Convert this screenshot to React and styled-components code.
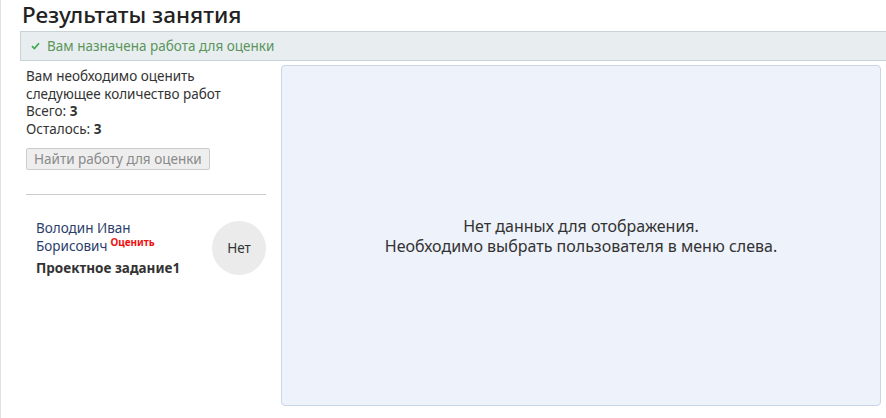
import styled, { createGlobalStyle } from "styled-components";

const GlobalStyle = createGlobalStyle`
  html, body {
    margin: 0;
    padding: 0;
    background: #ffffff;
  }
  body {
    font-family: "Noto Sans", "Open Sans", sans-serif;
    color: #333333;
  }
`;

const Page = styled.div`
  width: 886px;
  height: 418px;
  box-sizing: border-box;
  border-left: 1px solid #e2e2e2;
  padding-left: 19px;
  overflow: hidden;
`;

const Title = styled.h1`
  margin: 0;
  padding: 0 0 0 2px;
  height: 31px;
  font-size: 22.5px;
  font-weight: 500;
  line-height: 29px;
  color: #222222;
`;

const Alert = styled.div`
  display: flex;
  align-items: center;
  gap: 7px;
  height: 28px;
  margin-right: -10px;
  padding-left: 10px;
  background: #e8eef0;
  border: 1px solid #c8d3d8;
  color: #5b955c;
  font-size: 13.5px;
`;

const Content = styled.div`
  display: flex;
  gap: 15px;
  margin-top: 4px;
`;

const Sidebar = styled.div`
  width: 240px;
  margin-left: 6px;
  padding-top: 3px;
  font-size: 13.5px;
  line-height: 17.5px;
  color: #333333;
`;

const FindButton = styled.button`
  margin-top: 10px;
  height: 22px;
  padding: 0 7px;
  background: #eeeeee;
  border: 1px solid #cccccc;
  border-radius: 2px;
  font-family: inherit;
  font-size: 13.5px;
  color: #8a8a8a;
`;

const Divider = styled.hr`
  margin: 24px 0 0;
  border: 0;
  border-top: 1px solid #cccccc;
`;

const StudentRow = styled.div`
  display: flex;
  align-items: center;
  justify-content: space-between;
  margin-top: 24px;
  padding-left: 10px;
`;

const StudentInfo = styled.div`
  width: 155px;
`;

const Name = styled.div`
  color: #2c3e6b;
  font-size: 13.5px;
  line-height: 18px;
`;

const Rate = styled.sup`
  color: #ee1111;
  font-size: 10px;
  font-weight: 700;
  margin-left: 3px;
  vertical-align: 5px;
  line-height: 0;
`;

const Task = styled.div`
  margin-top: 5px;
  font-weight: 700;
  color: #333333;
`;

const Badge = styled.div`
  display: flex;
  align-items: center;
  justify-content: center;
  width: 54px;
  height: 54px;
  border-radius: 50%;
  background: #ebebeb;
  font-size: 13.5px;
  color: #333333;
`;

const Panel = styled.div`
  display: flex;
  align-items: center;
  justify-content: center;
  width: 598px;
  height: 339px;
  background: #eef2fa;
  border: 1px solid #c9d6ea;
  border-radius: 4px;
  text-align: center;
  font-size: 16px;
  line-height: 20px;
  color: #333333;
`;

function Check() {
  return (
    <svg width="9" height="8" viewBox="0 0 9 8">
      <path d="M1 4.2 L3.4 6.5 L8 1.2" fill="none" stroke="#3aa84a" strokeWidth="1.6" />
    </svg>
  );
}

export default function App() {
  return (
    <>
      <GlobalStyle />
      <Page>
        <Title>Результаты занятия</Title>
        <Alert>
          <Check />
          Вам назначена работа для оценки
        </Alert>
        <Content>
          <Sidebar>
            Вам необходимо оценить
            <br />
            следующее количество работ
            <br />
            Всего: <b>3</b>
            <br />
            Осталось: <b>3</b>
            <br />
            <FindButton>Найти работу для оценки</FindButton>
            <Divider />
            <StudentRow>
              <StudentInfo>
                <Name>
                  Володин Иван Борисович<Rate>Оценить</Rate>
                </Name>
                <Task>Проектное задание1</Task>
              </StudentInfo>
              <Badge>Нет</Badge>
            </StudentRow>
          </Sidebar>
          <Panel>
            Нет данных для отображения.
            <br />
            Необходимо выбрать пользователя в меню слева.
          </Panel>
        </Content>
      </Page>
    </>
  );
}
